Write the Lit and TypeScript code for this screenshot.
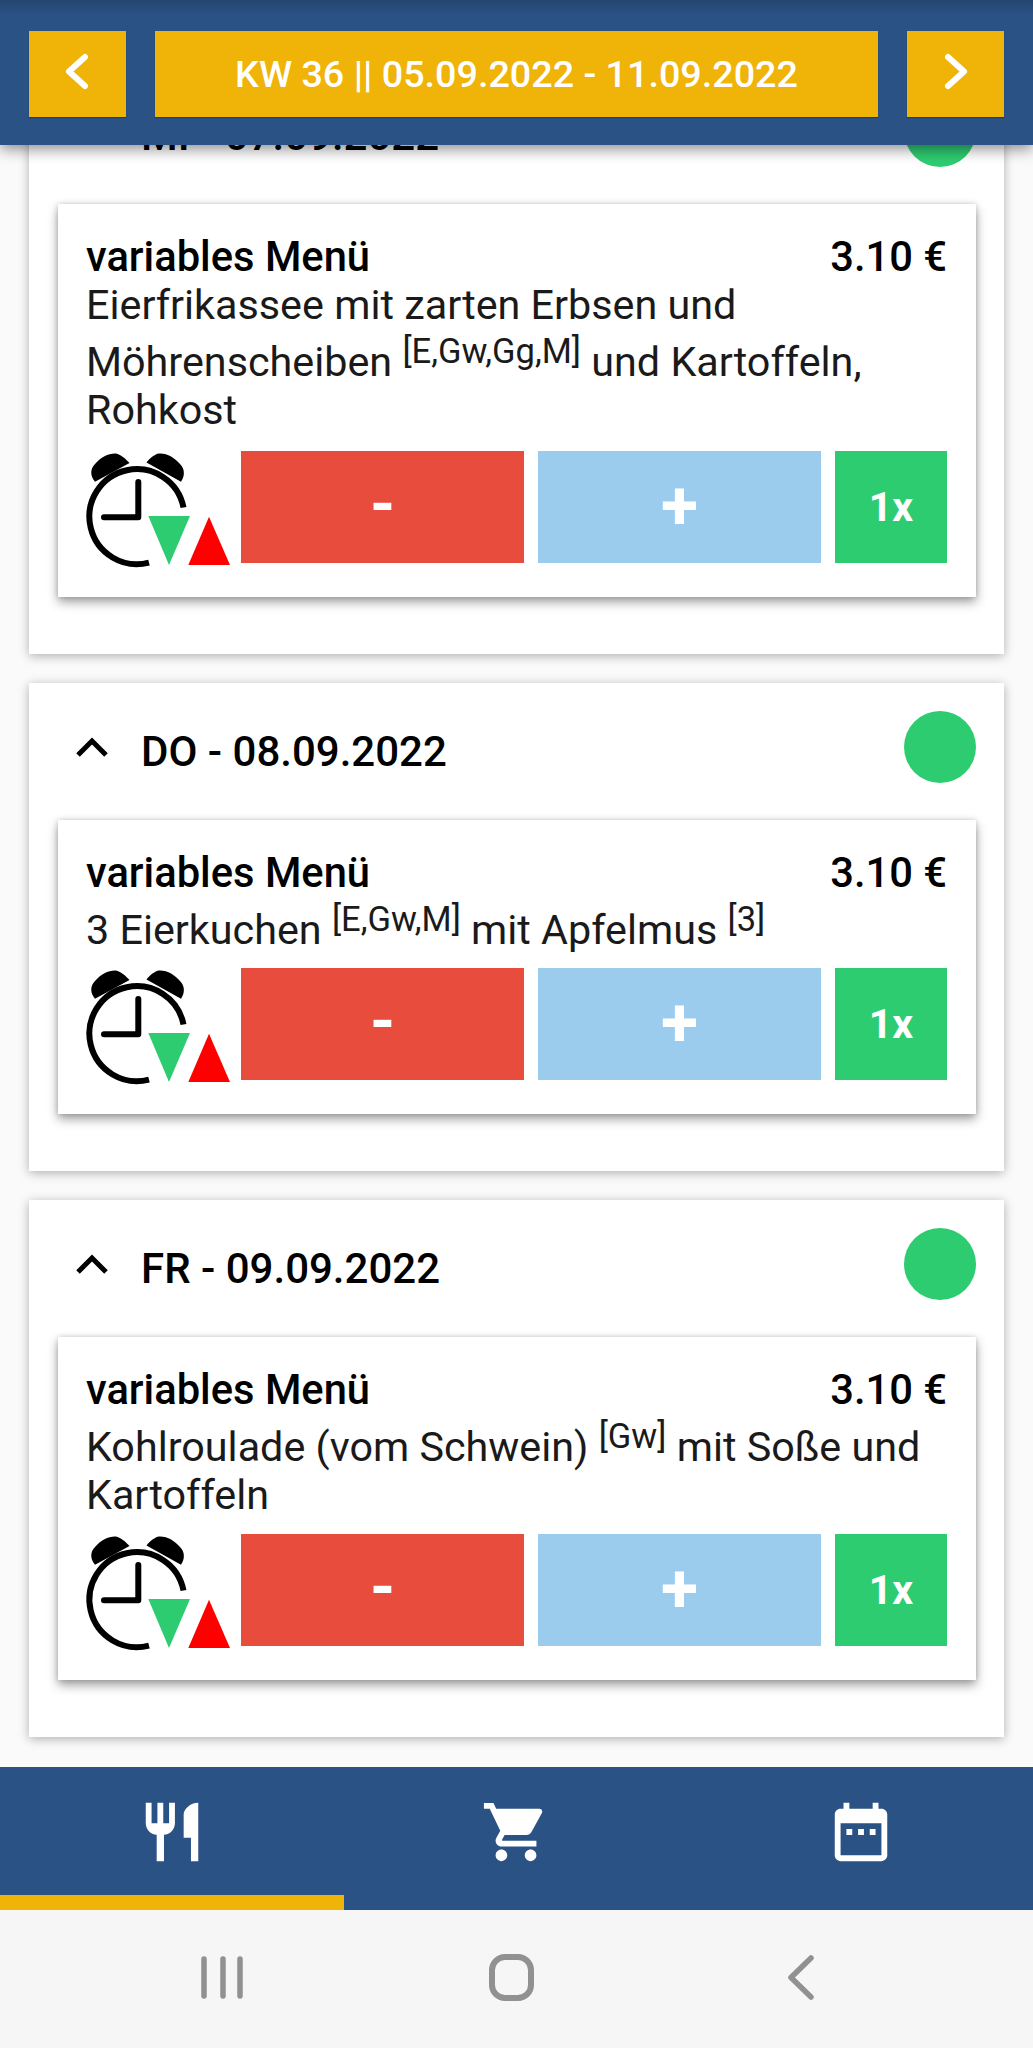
import { LitElement, html, css, svg } from "lit";
import { customElement } from "lit/decorators.js";

const days = [
  { date: "MI - 07.09.2022", text: html`Eierfrikassee mit zarten Erbsen und Möhrenscheiben <sup>[E,Gw,Gg,M]</sup> und Kartoffeln, Rohkost`, gap: "g1" },
  { date: "DO - 08.09.2022", text: html`3 Eierkuchen <sup>[E,Gw,M]</sup> mit Apfelmus <sup>[3]</sup>`, gap: "g2" },
  { date: "FR - 09.09.2022", text: html`Kohlroulade (vom Schwein) <sup>[Gw]</sup> mit Soße und Kartoffeln`, gap: "g3" },
];

const clock = svg`
  <path d="M96.5 56.5A47.5 47.5 0 1 0 62 111.6" fill="none" stroke="#000" stroke-width="6" stroke-linecap="butt"/>
  <path d="M51.3 31V66.3H17" fill="none" stroke="#000" stroke-width="6" stroke-linecap="round" stroke-linejoin="round"/>
  <path d="M8 30.7C3 25 3 18 8 13C14 6 22 2 29 2.5C33 3 39 8 42.5 12Z" fill="#000"/>
  <path d="M59.5 11.5C63 7 68 3 72 2.5C80 2 88 7 93 13C98 18 98 25 94 30.7Z" fill="#000"/>
  <path d="M61.3 65H103L82 114Z" fill="#2ecc71"/>
  <path d="M101.3 114H143L122 65.7Z" fill="#ff0000"/>
`;

@customElement("app-root")
export class AppRoot extends LitElement {
  static styles = css`
    :host {
      display: flex;
      flex-direction: column;
      width: 1033px;
      height: 2048px;
      overflow: hidden;
      background: #fafafa;
      font-family: Roboto, "Liberation Sans", sans-serif;
      color: #000;
    }
    .top {
      position: relative;
      z-index: 2;
      flex: none;
      height: 145px;
      box-sizing: border-box;
      padding: 31px 29px 28px;
      display: flex;
      gap: 29px;
      background: linear-gradient(#24456f, #2a5285 14px);
      box-shadow: 0 4px 14px rgba(0, 0, 0, 0.45);
    }
    .yb {
      background: #f0b307;
      color: #fff;
      display: flex;
      align-items: center;
      justify-content: center;
      font-size: 37.7px;
      font-weight: 500;
      box-shadow: 0 1px 1px rgba(0, 0, 0, 0.25);
    }
    .side { flex: none; width: 97px; }
    .side svg { width: 97px; height: 86px; display: block; }
    .mid { flex: 1; }
    .list {
      flex: 1;
      min-height: 0;
      overflow: hidden;
      padding: 0 29px;
      display: flex;
      flex-direction: column;
      gap: 29px;
    }
    .day {
      flex: none;
      background: #fff;
      box-shadow: 0 2px 10px rgba(0, 0, 0, 0.3);
      padding: 0 28px 57px 29px;
    }
    .day:first-child { margin-top: -78px; }
    .dh {
      height: 137px;
      box-sizing: border-box;
      padding: 0 0 10px 18px;
      display: flex;
      align-items: center;
      gap: 33px;
      font-size: 42px;
      font-weight: 500;
    }
    .dh svg { flex: none; width: 32px; height: 20px; display: block; }
    .dh .name { flex: 1; padding-top: 10px; }
    .dot { flex: none; width: 72px; height: 72px; border-radius: 50%; background: #2ecc71; }
    .card {
      background: #fff;
      padding: 34px 29px 34px;
      box-shadow: 0 5px 10px rgba(0, 0, 0, 0.38), 0 0 5px rgba(0, 0, 0, 0.15);
    }
    .title {
      display: flex;
      justify-content: space-between;
      margin: 0 0 5px -1px;
      font-size: 41.7px;
      font-weight: 500;
      line-height: 38px;
    }
    .body { margin-left: -1px; font-size: 41.3px; line-height: 48px; color: #1a1a1a; }
    sup { font-size: 34.5px; line-height: 44px; vertical-align: 13px; }
    .row { display: flex; gap: 14px; }
    .g1 { margin-top: 17px; }
    .g2 { margin-top: 14px; }
    .g3 { margin-top: 15px; }
    .clock { flex: none; width: 144px; height: 112px; margin-right: -4px; overflow: visible; }
    .b {
      height: 112px;
      box-sizing: border-box;
      display: flex;
      align-items: center;
      justify-content: center;
      color: #fff;
      font-weight: 700;
    }
    .minus { flex: none; width: 283px; background: #e74c3c; font-size: 64px; padding-bottom: 6px; }
    .plus { flex: none; width: 283px; background: #9bcbed; font-size: 68px; padding-bottom: 2px; }
    .qty { flex: none; width: 112px; background: #2ecc71; font-size: 41px; }
    .nav {
      flex: none;
      height: 143px;
      background: #2a5285;
      display: flex;
      align-items: flex-start;
    }
    .tab {
      flex: 1;
      height: 143px;
      display: flex;
      justify-content: center;
      padding-top: 30px;
      box-sizing: border-box;
    }
    .tab svg { width: 70px; height: 70px; fill: #fff; display: block; }
    .tab.on { border-bottom: 15px solid #f0b307; }
    .sys {
      flex: none;
      height: 138px;
      background: #f6f6f6;
    }
    .sys svg { width: 1033px; height: 138px; display: block; }
  `;

  private renderDay(d: (typeof days)[number]) {
    return html`
      <section class="day">
        <div class="dh">
          <svg viewBox="0 0 32 20"><path d="M2 18L16 4L30 18" fill="none" stroke="#000" stroke-width="5"/></svg>
          <span class="name">${d.date}</span>
          <span class="dot"></span>
        </div>
        <div class="card">
          <div class="title"><span>variables Menü</span><span>3.10 €</span></div>
          <div class="body">${d.text}</div>
          <div class="row ${d.gap}">
            <svg class="clock" viewBox="0 0 144 112">${clock}</svg>
            <div class="b minus">-</div>
            <div class="b plus">+</div>
            <div class="b qty">1x</div>
          </div>
        </div>
      </section>
    `;
  }

  render() {
    return html`
      <header class="top">
        <div class="yb side">
          <svg viewBox="0 0 97 86"><path d="M56 26L40 40.5L56 55" fill="none" stroke="#fff" stroke-width="6" stroke-linejoin="round" stroke-linecap="round"/></svg>
        </div>
        <div class="yb mid">KW 36 || 05.09.2022 - 11.09.2022</div>
        <div class="yb side">
          <svg viewBox="0 0 97 86"><path d="M41 26L57 40.5L41 55" fill="none" stroke="#fff" stroke-width="6" stroke-linejoin="round" stroke-linecap="round"/></svg>
        </div>
      </header>
      <main class="list">${days.map((d) => this.renderDay(d))}</main>
      <nav class="nav">
        <div class="tab on"><svg viewBox="0 0 24 24"><path d="M11 9H9V2H7v7H5V2H3v7c0 2.12 1.66 3.84 3.75 3.97V22h2.5v-9.03C11.34 12.84 13 11.12 13 9V2h-2v7zm5-3v8h2.5v8H21V2c-2.76 0-5 2.24-5 4z"/></svg></div>
        <div class="tab"><svg viewBox="0 0 24 24"><path d="M7 18c-1.1 0-1.99.9-1.99 2S5.9 22 7 22s2-.9 2-2-.9-2-2-2zM1 2v2h2l3.6 7.59-1.35 2.45c-.16.28-.25.61-.25.96 0 1.1.9 2 2 2h12v-2H7.42c-.14 0-.25-.11-.25-.25l.03-.12.9-1.63h7.45c.75 0 1.41-.41 1.75-1.03l3.58-6.47c.08-.14.12-.31.12-.48 0-.55-.45-1-1-1H5.21l-.94-2H1zm16 16c-1.1 0-1.99.9-1.99 2s.89 2 1.99 2 2-.9 2-2-.9-2-2-2z"/></svg></div>
        <div class="tab"><svg viewBox="0 0 24 24"><path d="M9 11H7v2h2v-2zm4 0h-2v2h2v-2zm4 0h-2v2h2v-2zm2-7h-1V2h-2v2H8V2H6v2H5c-1.11 0-1.99.9-1.99 2L3 20c0 1.1.89 2 2 2h14c1.1 0 2-.9 2-2V6c0-1.1-.9-2-2-2zm0 16H5V9h14v11z"/></svg></div>
      </nav>
      <footer class="sys">
        <svg viewBox="0 0 1033 138" fill="none" stroke="#919191" stroke-linecap="round" stroke-linejoin="round">
          <path d="M204 49V86M223 49V86M240 49V86" stroke-width="5.5"/>
          <rect x="492" y="47" width="39" height="41" rx="13" stroke-width="6"/>
          <path d="M811 48L791 67.5L811 87" stroke-width="5.5"/>
        </svg>
      </footer>
    `;
  }
}
